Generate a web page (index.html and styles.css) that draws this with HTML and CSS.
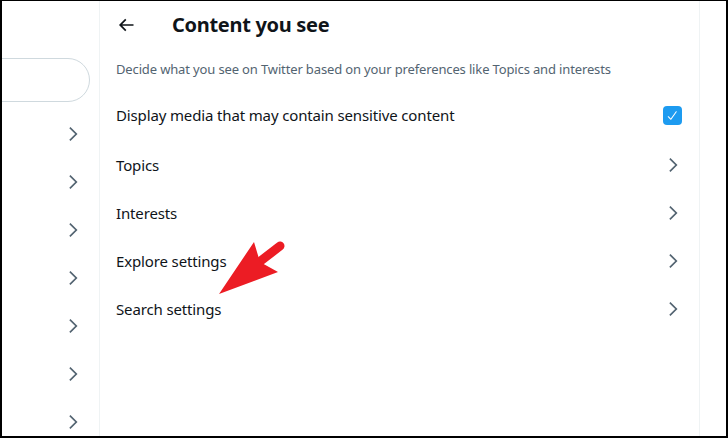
FILE: index.html
```html
<!DOCTYPE html>
<html>
<head>
<meta charset="utf-8">
<link rel="stylesheet" href="styles.css">
</head>
<body>
<div class="frame">
  <aside class="side">
    <div class="search"></div>
    <ul class="side-list">
      <li class="side-row"><svg class="chev" viewBox="0 0 24 24"><path d="M14.586 12L7.543 4.96l1.414-1.42L17.414 12l-8.457 8.46-1.414-1.42L14.586 12z"/></svg></li>
      <li class="side-row"><svg class="chev" viewBox="0 0 24 24"><path d="M14.586 12L7.543 4.96l1.414-1.42L17.414 12l-8.457 8.46-1.414-1.42L14.586 12z"/></svg></li>
      <li class="side-row"><svg class="chev" viewBox="0 0 24 24"><path d="M14.586 12L7.543 4.96l1.414-1.42L17.414 12l-8.457 8.46-1.414-1.42L14.586 12z"/></svg></li>
      <li class="side-row"><svg class="chev" viewBox="0 0 24 24"><path d="M14.586 12L7.543 4.96l1.414-1.42L17.414 12l-8.457 8.46-1.414-1.42L14.586 12z"/></svg></li>
      <li class="side-row"><svg class="chev" viewBox="0 0 24 24"><path d="M14.586 12L7.543 4.96l1.414-1.42L17.414 12l-8.457 8.46-1.414-1.42L14.586 12z"/></svg></li>
      <li class="side-row"><svg class="chev" viewBox="0 0 24 24"><path d="M14.586 12L7.543 4.96l1.414-1.42L17.414 12l-8.457 8.46-1.414-1.42L14.586 12z"/></svg></li>
      <li class="side-row"><svg class="chev" viewBox="0 0 24 24"><path d="M14.586 12L7.543 4.96l1.414-1.42L17.414 12l-8.457 8.46-1.414-1.42L14.586 12z"/></svg></li>
    </ul>
  </aside>
  <main class="main">
    <header class="head">
      <svg class="back" viewBox="0 0 24 24"><path d="M7.414 13l5.043 5.04-1.414 1.42L3.586 12l7.457-7.46 1.414 1.42L7.414 11H21v2H7.414z"/></svg>
      <h1 class="title">Content you see</h1>
    </header>
    <p class="sub">Decide what you see on Twitter based on your preferences like Topics and interests</p>
    <div class="row row-first">
      <span class="label">Display media that may contain sensitive content</span>
      <span class="check"><svg viewBox="0 0 24 24"><path d="M9 20c-.264 0-.52-.104-.707-.293l-4.785-4.785c-.39-.39-.39-1.023 0-1.414s1.023-.39 1.414 0l3.946 3.945L18.075 4.41c.32-.45.94-.558 1.395-.24.45.318.56.942.24 1.394L9.817 19.577c-.17.24-.438.395-.732.42-.028.002-.057.003-.085.003z"/></svg></span>
    </div>
    <div class="row"><span class="label">Topics</span><svg class="chev" viewBox="0 0 24 24"><path d="M14.586 12L7.543 4.96l1.414-1.42L17.414 12l-8.457 8.46-1.414-1.42L14.586 12z"/></svg></div>
    <div class="row"><span class="label">Interests</span><svg class="chev" viewBox="0 0 24 24"><path d="M14.586 12L7.543 4.96l1.414-1.42L17.414 12l-8.457 8.46-1.414-1.42L14.586 12z"/></svg></div>
    <div class="row"><span class="label">Explore settings</span><svg class="chev" viewBox="0 0 24 24"><path d="M14.586 12L7.543 4.96l1.414-1.42L17.414 12l-8.457 8.46-1.414-1.42L14.586 12z"/></svg></div>
    <div class="row"><span class="label">Search settings</span><svg class="chev" viewBox="0 0 24 24"><path d="M14.586 12L7.543 4.96l1.414-1.42L17.414 12l-8.457 8.46-1.414-1.42L14.586 12z"/></svg></div>
  </main>
  <div class="rest"></div>
  <svg class="pointer" viewBox="0 0 728 438" width="728" height="438">
    <line x1="280" y1="246" x2="258" y2="263" stroke="#ec1c24" stroke-width="9" stroke-linecap="round"/>
    <polygon points="219,294 254,242 260,262 278,272" fill="#ec1c24"/>
  </svg>
</div>
</body>
</html>
```

FILE: styles.css
```css
* { box-sizing: border-box; }
html, body { margin: 0; padding: 0; background: #000; }
body { width: 728px; height: 438px; overflow: hidden; font-family: "Segoe UI", "Noto Sans", "Open Sans", sans-serif; color: #0f1419; }
.frame {
  position: relative;
  width: 728px;
  height: 438px;
  border-style: solid;
  border-color: #000;
  border-width: 1px 2px 2px 2px;
  background: #fff;
  display: flex;
  overflow: hidden;
}
.side {
  width: 98px;
  flex: none;
  border-right: 1px solid #eff3f4;
  overflow: hidden;
}
.search {
  margin-top: 57px;
  margin-left: -200px;
  width: 288px;
  height: 44px;
  border: 1px solid #cfd9de;
  border-radius: 22px;
}
.side-list { list-style: none; margin: 8px 0 0; padding: 0; }
.side-row {
  height: 48px;
  display: flex;
  align-items: center;
  justify-content: flex-end;
  padding-right: 16px;
}
.chev { width: 20px; height: 20px; fill: #536471; flex: none; }
.main {
  width: 600px;
  flex: none;
  border-right: 1px solid #eff3f4;
  display: flex;
  flex-direction: column;
}
.head {
  height: 47px;
  display: flex;
  align-items: center;
  padding-left: 16px;
}
.back { width: 20px; height: 20px; fill: #0f1419; margin-right: 36px; }
.title { margin: 0; font-size: 20px; font-weight: 700; line-height: 24px; letter-spacing: -0.3px; }
.sub {
  margin: 0;
  height: 42px;
  display: flex;
  align-items: center;
  padding: 0 16px;
  font-size: 13px;
  color: #536471;
  letter-spacing: -0.14px;
}
.row {
  height: 48px;
  display: flex;
  align-items: center;
  justify-content: space-between;
  padding: 0 16px;
  font-size: 15px;
  letter-spacing: -0.14px;
}
.row-first { height: 51px; padding-bottom: 1px; }
.check {
  width: 19px;
  height: 19px;
  border-radius: 4px;
  background: #1d9bf0;
  display: flex;
  align-items: center;
  justify-content: center;
  margin-right: 1px;
}
.check svg { width: 13px; height: 13px; fill: #fff; }
.rest { flex: 1; }
.pointer { position: absolute; left: -2px; top: -1px; pointer-events: none; }
```
